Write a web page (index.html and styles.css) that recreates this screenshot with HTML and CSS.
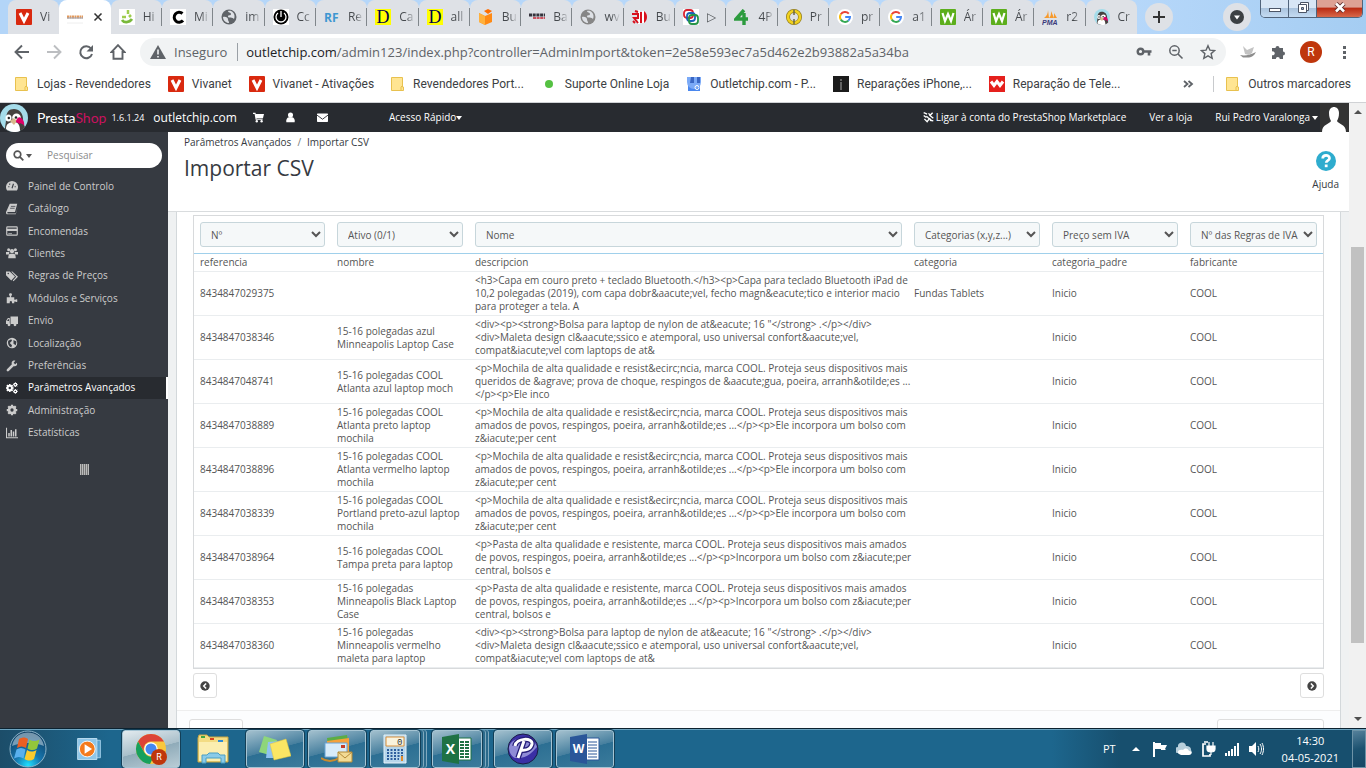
FILE: index.html
```html
<!DOCTYPE html>
<html lang="pt">
<head>
  <meta charset="UTF-8">
  <meta name="viewport" content="width=device-width, initial-scale=1.0">
  <title>Importar CSV - outletchip.com</title>
  <link rel="stylesheet" href="styles.css">
</head>
<body>
  <svg class="sprite" aria-hidden="true">
    <symbol id="v" viewBox="0 0 16 16"><rect width="16" height="16" rx="1" fill="#d9290f"/><path d="M4 4l4 8 4-8" fill="none" stroke="#fff" stroke-width="3"/></symbol>
    <symbol id="folder" viewBox="0 0 14 16"><path d="M.5 1.500h11v9.500h1v3.500H.5z" fill="#ffe592" stroke="#e8c14f"/><path d="M11.500 9.500l-1.500 1.500v3.500" fill="none" stroke="#e8c14f"/></symbol>
    <symbol id="globe" viewBox="0 0 16 16"><circle cx="8" cy="8" r="7.500" fill="currentColor"/><path d="M2 8c3-.5 5 .5 5 2.500 0 1.500 1 1.500 1 3.500-3 0-6-2.500-6-6zM7 2c0 2 3 1 3 3S7 5.500 7 7.500s5 .5 6 2.500c1-2 .6-5-1-6.500C11 2 9 1.500 7 2z" fill="#dee1e6"/></symbol>
    <symbol id="google" viewBox="0 0 16 16"><circle cx="8" cy="8" r="8" fill="#fff"/><g fill="none" stroke-width="2"><path d="M11.800 4.600A5 5 0 0 0 3.800 5.300" stroke="#ea4335"/><path d="M3.800 5.300a5 5 0 0 0 0 5.300" stroke="#fbbc05"/><path d="M3.800 10.600a5 5 0 0 0 7.500 1.100" stroke="#34a853"/><path d="M11.300 11.700A5 5 0 0 0 13 8H8.200" stroke="#4285f4"/></g></symbol>
    <symbol id="w" viewBox="0 0 16 16"><rect width="16" height="16" rx="1" fill="#5cae1c"/><path d="M2.500 4l2.500 8 3-7 3 7 2.500-8" fill="none" stroke="#fff" stroke-width="2.200"/></symbol>
    <symbol id="presta" viewBox="0 0 28 28"><circle cx="14" cy="14" r="14" fill="#a5dcea"/><path d="M5 25c0-4 1-6 1-9 0-8 3-11 8-11s9 4 9 10c0 4 1 6 2 8-5 6-14 6-20 2z" fill="#46413f"/><path d="M6 25c0-5 3-7 8-7 4 0 6 3 6 9-5 2-10 1-14-2z" fill="#fff"/><ellipse cx="8.500" cy="14" rx="3" ry="3.600" fill="#fff"/><ellipse cx="16.500" cy="13.500" rx="4.300" ry="4" fill="#fff"/><circle cx="8.800" cy="14" r="1.200" fill="#222"/><circle cx="16" cy="13.500" r="1.300" fill="#222"/><path d="M10 17l4-3 3 3-3 4z" fill="#d8b98c"/><path d="M16 18c0-3 3-6 5-4 2 1 4 5 3 8-2-2-5-2-8-4z" fill="#df0067"/><path d="M20 19l4 2-3 5z" fill="#46413f"/></symbol>
    <symbol id="cog" viewBox="0 0 16 16"><path d="M8 1v14M1 8h14M3 3l10 10M13 3L3 13" stroke="currentColor" stroke-width="3"/><circle cx="8" cy="8" r="3.900" fill="none" stroke="currentColor" stroke-width="3.400"/><circle cx="8" cy="8" r="2.200" fill="#363a41"/></symbol>
  </svg>

  <header class="browser">
    <div class="tabstrip">
      <div class="tabs">
        <a href="#" class="tab"><svg viewBox="0 0 16 16"><use href="#v"/></svg><span>Vi</span></a>
        <a href="#" class="tab active"><svg viewBox="0 0 16 16"><path d="M0 8h16" stroke="#e39a5c" stroke-width="3" stroke-dasharray="2 .5"/><path d="M0 9h16" stroke="#9aa5bb"/><path d="M0 14h16" stroke="#eee"/></svg><svg class="close" viewBox="0 0 16 16"><path d="M4 4l8 8M12 4l-8 8" stroke="#333" stroke-width="1.800"/></svg></a>
        <a href="#" class="tab"><svg viewBox="0 0 16 16"><rect width="16" height="16" fill="#fff"/><path d="M9 1v4M3 8h4M12 6l-2 2" stroke="#9fce4e" stroke-width="2.500"/><path d="M3 11c2 3 7 3 10-1" fill="none" stroke="#79b93b" stroke-width="2.800"/></svg><span>Hi</span></a>
        <a href="#" class="tab"><svg viewBox="0 0 16 16"><rect width="16" height="16" fill="#fff"/><path d="M12.500 4.500a5 5 0 1 0 .5 7" fill="none" stroke="#000" stroke-width="3"/></svg><span>Mi</span></a>
        <a href="#" class="tab"><svg class="gray" viewBox="0 0 16 16"><use href="#globe"/></svg><span>im</span></a>
        <a href="#" class="tab"><svg viewBox="0 0 16 16"><rect width="16" height="16" fill="#fff"/><circle cx="8" cy="8" r="7.500" fill="#000"/><path d="M5 4a5 5 0 1 0 6 0M8 2v6" fill="none" stroke="#fff" stroke-width="1.300"/></svg><span>Cc</span></a>
        <a href="#" class="tab"><svg viewBox="0 0 16 16"><text x="0" y="13" font-family="Open Sans, sans-serif" font-weight="700" font-size="12" fill="#3e97d1">RF</text></svg><span>Re</span></a>
        <a href="#" class="tab"><svg viewBox="0 0 16 16"><rect width="16" height="16" fill="#ff0"/><text x="8" y="14" text-anchor="middle" font-family="Liberation Serif, serif" font-size="18" fill="#00004a">D</text></svg><span>Ca</span></a>
        <a href="#" class="tab"><svg viewBox="0 0 16 16"><rect width="16" height="16" fill="#ff0"/><text x="8" y="14" text-anchor="middle" font-family="Liberation Serif, serif" font-size="18" fill="#00004a">D</text></svg><span>all</span></a>
        <a href="#" class="tab"><svg viewBox="0 0 16 16"><path d="M1 4l6 3 7-3v9l-7 3-6-3z" fill="#ff8a14"/><path d="M1 4l6 3v9l-6-3z" fill="#ffb13d"/><path d="M6 2l4-2 4 2-4 3z" fill="#ff6e00"/></svg><span>Bu</span></a>
        <a href="#" class="tab"><svg viewBox="0 0 16 16"><path d="M0 6h16" stroke="#35333c" stroke-width="3" stroke-dasharray="3 .7"/><path d="M4 9h12" stroke="#cb5360" stroke-width="2" stroke-dasharray="3 .6"/></svg><span>Ba</span></a>
        <a href="#" class="tab"><svg class="gray light" viewBox="0 0 16 16"><use href="#globe"/></svg><span>wv</span></a>
        <a href="#" class="tab"><svg viewBox="0 0 16 16"><path d="M7 1v14M11 2v12" stroke="#fff" stroke-width="2"/><path d="M12 2c4 3 4 9 0 12z" fill="#d8101c"/><path d="M0 5h6v4H2l4 5M9 3v11M3 2l3 1M1 12l2 2" fill="none" stroke="#d8101c" stroke-width="2"/></svg><span>Bu</span></a>
        <a href="#" class="tab"><svg viewBox="0 0 16 16"><rect width="16" height="16" fill="#fff"/><g fill="none" stroke-width="1.800"><rect x="1" y="1" width="9" height="8" rx="3" stroke="#d92231"/><rect x="4" y="4" width="8" height="8" rx="3" stroke="#1c63b7"/><rect x="6" y="6" width="9" height="9" rx="3" stroke="#269447"/></g></svg><span>▷</span></a>
        <a href="#" class="tab"><svg viewBox="0 0 16 16"><path d="M10 1L2 10h12M10 4v12" fill="none" stroke="#2c9b3e" stroke-width="3.400"/></svg><span>4P</span></a>
        <a href="#" class="tab"><svg viewBox="0 0 16 16"><circle cx="8" cy="8" r="6" fill="none" stroke="#8f7a19" stroke-width="4"/><circle cx="8" cy="8" r="6" fill="none" stroke="#f2d21f" stroke-width="2.600"/><path d="M8 1v5M8 10v5" stroke="#6b6748" stroke-width="1.500"/></svg><span>Pr</span></a>
        <a href="#" class="tab"><svg viewBox="0 0 16 16"><use href="#google"/></svg><span>pr</span></a>
        <a href="#" class="tab"><svg viewBox="0 0 16 16"><use href="#google"/></svg><span>a1</span></a>
        <a href="#" class="tab"><svg viewBox="0 0 16 16"><use href="#w"/></svg><span>Ár</span></a>
        <a href="#" class="tab"><svg viewBox="0 0 16 16"><use href="#w"/></svg><span>Ár</span></a>
        <a href="#" class="tab"><svg viewBox="0 0 16 16"><path d="M2 9c3-2 4-5 4-8l1 8zM7 9c2-2 2-4 2-7l3 7zM12 9V4l3 5z" fill="#f79a2c"/><text x="0" y="16" font-family="Liberation Sans, sans-serif" font-style="italic" font-weight="700" font-size="7" fill="#3a3a7c">PMA</text></svg><span>r2</span></a>
        <a href="#" class="tab"><svg viewBox="0 0 16 16"><use href="#presta"/></svg><span>Cr</span></a>
      </div>
      <div class="strip-right">
        <button class="round" aria-label="Novo separador"><svg viewBox="0 0 16 16"><path d="M8 2v12M2 8h12" stroke="#333" stroke-width="2"/></svg></button>
        <button class="round search-tabs" aria-label="Pesquisar separadores"><svg viewBox="0 0 16 16"><circle cx="8" cy="8" r="7" fill="#3c4043"/><path d="M5 6.500h6L8 10.500z" fill="#fff"/></svg></button>
        <div class="window-buttons">
          <button aria-label="Minimizar"><svg viewBox="0 0 16 16"><rect x="2.500" y="8.500" width="11" height="3" fill="#fff" stroke="#4c5566"/></svg></button>
          <button aria-label="Restaurar"><svg viewBox="0 0 16 16"><path d="M5.500 2.500h8v8h-8z" fill="#fff" stroke="#4c5566"/><path d="M3.500 4.500h8v8h-8z" fill="#fff" stroke="#4c5566"/><path d="M6.500 7.500h2v2h-2z" fill="#9bb0c8" stroke="#4c5566"/></svg></button>
          <button class="close-window" aria-label="Fechar"><svg viewBox="0 0 16 16"><path d="M4 3.500l8 8M12 3.500l-8 8" stroke="#5b2b2b" stroke-width="4.500"/><path d="M4 3.500l8 8M12 3.500l-8 8" stroke="#fff" stroke-width="2.600"/></svg></button>
        </div>
      </div>
    </div>

    <div class="toolbar">
      <div class="nav-buttons">
        <button aria-label="Recuar"><svg viewBox="0 0 16 16"><path d="M15 8H2M8 1.500L1.500 8 8 14.500" fill="none" stroke="#5f6368" stroke-width="1.900"/></svg></button>
        <button aria-label="Avançar"><svg viewBox="0 0 16 16"><path d="M1 8h13M8 1.500L14.500 8 8 14.500" fill="none" stroke="#bcbec1" stroke-width="1.900"/></svg></button>
        <button aria-label="Recarregar"><svg viewBox="0 0 16 16"><path d="M13 4.500A6 6 0 1 0 14 10" fill="none" stroke="#5f6368" stroke-width="2"/><path d="M15 1v6.500H8.500z" fill="#5f6368"/></svg></button>
        <button aria-label="Página inicial"><svg viewBox="0 0 16 16"><path d="M8 1.200L1.500 8h2v6.700h9V8h2z" fill="none" stroke="#5f6368" stroke-width="1.900"/></svg></button>
      </div>
      <div class="address">
        <svg class="warn" viewBox="0 0 16 16"><path d="M8 1l8 14H0z" fill="#5f6368"/><path d="M8 5.500v5M8 12v1.500" stroke="#f1f3f4" stroke-width="1.600"/></svg>
        <span class="insecure">Inseguro</span>
        <span class="url"><b>outletchip.com</b>/admin123/index.php?controller=AdminImport&amp;token=2e58e593ec7a5d462e2b93882a5a34ba</span>
        <svg viewBox="0 0 16 16"><circle cx="4.500" cy="7.500" r="2.800" fill="none" stroke="#5f6368" stroke-width="2.400"/><path d="M8 7.500h7.500M13 7.500v4" stroke="#5f6368" stroke-width="2.600"/></svg>
        <svg viewBox="0 0 16 16"><circle cx="6.500" cy="6.500" r="4.700" fill="none" stroke="#5f6368" stroke-width="1.500"/><path d="M10 10l4.500 4.500M4.300 6.500h4.400" stroke="#5f6368" stroke-width="1.600"/></svg>
        <svg viewBox="0 0 16 16"><path d="M8 1.700l1.900 4.400 4.800.4-3.600 3.100 1.100 4.700L8 11.800l-4.200 2.500 1.100-4.700-3.600-3.100 4.800-.4z" fill="none" stroke="#5f6368" stroke-width="1.400"/></svg>
      </div>
      <div class="extensions">
        <svg viewBox="0 0 16 16"><path d="M0 11c5 1 10 0 16-3-2 4-4 5-7 5.500H3z" fill="#8d8d8d"/><path d="M5 10L3 2l4 4 7-3-2 6-3 2z" fill="#c3c3c3"/></svg>
        <svg viewBox="0 0 16 16"><path d="M2 4h3.500a2 2 0 1 1 4 0H13v3.500a2 2 0 1 1 0 4V15H9.800a2 2 0 1 0-4 0H2v-3.800a2 2 0 1 0 0-3.700z" fill="#5f6368"/></svg>
        <button class="profile">R</button>
        <svg viewBox="0 0 16 16"><path d="M7 2h3v3H7zM7 7h3v3H7zM7 12h3v3H7z" fill="#5f6368"/></svg>
      </div>
    </div>

    <nav class="bookmarks">
      <a href="#"><svg class="fold" viewBox="0 0 14 16"><use href="#folder"/></svg>Lojas - Revendedores</a>
      <a href="#"><svg viewBox="0 0 16 16"><use href="#v"/></svg>Vivanet</a>
      <a href="#"><svg viewBox="0 0 16 16"><use href="#v"/></svg>Vivanet - Ativações</a>
      <a href="#"><svg class="fold" viewBox="0 0 14 16"><use href="#folder"/></svg>Revendedores Port...</a>
      <a href="#"><svg viewBox="0 0 16 16"><circle cx="8" cy="8" r="4" fill="#55c142"/></svg>Suporte Online Loja</a>
      <a href="#"><svg viewBox="0 0 16 16"><path d="M2 5h12v10H2z" fill="#4a87ee"/><path d="M1 1h14v5a2 2 0 0 1-14 0z" fill="#7baaf7"/><path d="M5 1h3v6H4zM11 1h3v6h-3z" fill="#3a67c4"/><circle cx="11" cy="11.500" r="2" fill="none" stroke="#fff"/></svg>Outletchip.com - P...</a>
      <a href="#"><svg viewBox="0 0 16 16"><rect width="16" height="16" fill="#1b1b1b"/><path d="M8 3v2M8 6v8" stroke="#aaa"/></svg>Reparações iPhone,...</a>
      <a href="#"><svg viewBox="0 0 16 16"><rect width="16" height="16" fill="#e5201d"/><path d="M2 5.500l3 4 3-4 3 4 3-4" fill="none" stroke="#fff" stroke-width="3"/></svg>Reparação de Tele...</a>
      <button class="more" aria-label="Mais marcadores"><svg viewBox="0 0 16 16"><path d="M4 5l3.500 3L4 11M8.500 5L12 8l-3.500 3" fill="none" stroke="#5f6368" stroke-width="1.800"/></svg></button>
      <a href="#" class="others"><svg class="fold" viewBox="0 0 14 16"><use href="#folder"/></svg>Outros marcadores</a>
    </nav>
  </header>

  <div class="page">
    <div class="site">
      <header class="topbar">
        <a href="#" class="logo"><svg viewBox="0 0 28 28"><use href="#presta"/></svg><span>Presta<em>Shop</em></span></a>
        <span class="version">1.6.1.24</span>
        <a href="#" class="shop-name">outletchip.com</a>
        <a href="#" class="notif" aria-label="Encomendas"><svg viewBox="0 0 16 16"><path d="M0 2h3l1.500 8.500H14" fill="none" stroke="currentColor" stroke-width="1.600"/><path d="M3.500 3H16l-1.500 6H4.500z" fill="currentColor"/><circle cx="5.500" cy="13.500" r="1.700" fill="currentColor"/><circle cx="12.500" cy="13.500" r="1.700" fill="currentColor"/></svg></a>
        <a href="#" class="notif" aria-label="Clientes"><svg viewBox="0 0 16 16"><circle cx="8" cy="4.500" r="3.700" fill="currentColor"/><path d="M2 15c-1-4 1-7 3.500-7.500h5C13 8 15 11 14 15z" fill="currentColor"/></svg></a>
        <a href="#" class="notif" aria-label="Mensagens"><svg viewBox="0 0 16 16"><rect y="2" width="16" height="12.500" rx="1" fill="currentColor"/><path d="M0 4.500l8 6 8-6" fill="none" stroke="#282b30" stroke-width="1.300"/></svg></a>
        <a href="#" class="quick">Acesso Rápido<i class="caret"></i></a>
        <a href="#" class="market"><svg viewBox="0 0 16 16"><path d="M1 1l5 2M1 5l4 3M8 2l3 3M14 1l-4 4 5 4M10 12l5 1M2 10l4 4 3-4-4-4M9 9l3 3" fill="none" stroke="currentColor" stroke-width="2"/></svg>Ligar à conta do PrestaShop Marketplace</a>
        <a href="#" class="view">Ver a loja</a>
        <a href="#" class="user">Rui Pedro Varalonga<i class="caret"></i></a>
        <svg class="avatar" viewBox="0 0 29 29"><rect width="29" height="29" fill="#333"/><path d="M9 10c0-8 10-8 10 0 0 4-1 6-2 8 1 3 9 3 9 11H2c0-8 8-8 9-11-1-2-2-4-2-8z" fill="#fff"/></svg>
      </header>

      <div class="columns">
        <aside class="sidebar">
          <form class="search">
            <svg viewBox="0 0 16 16"><circle cx="6.500" cy="6.500" r="4.800" fill="none" stroke="#555" stroke-width="2.400"/><path d="M10 10l5 5" stroke="#555" stroke-width="2.600"/></svg>
            <i class="caret"></i>
            <input type="text" aria-label="Pesquisar" placeholder="Pesquisar">
          </form>
          <nav class="menu">
            <a href="#"><svg viewBox="0 0 16 16"><path d="M1.500 14a8 8 0 1 1 13 0z" fill="currentColor"/><path d="M8 11l2-6M3 9h1.500M4.500 5l1 1M11.500 9H13" stroke="#363a41" stroke-width="1.500"/></svg>Painel de Controlo</a>
            <a href="#"><svg viewBox="0 0 16 16"><path d="M5 1h10l-3 11H3c-2 0-2 2 0 2h10l3-10-3 11H2c-3 0-2-4-1-5z" fill="currentColor"/><path d="M6.500 4.500h6M5.500 7h6" stroke="#363a41"/></svg>Catálogo</a>
            <a href="#"><svg viewBox="0 0 16 16"><rect x="1" y="2.500" width="14" height="11" rx="1" fill="none" stroke="currentColor" stroke-width="1.500"/><path d="M1 6.500h14" stroke="currentColor" stroke-width="3"/><path d="M3 11.500h5" stroke="currentColor"/></svg>Encomendas</a>
            <a href="#"><svg viewBox="0 0 16 16"><circle cx="3.500" cy="3.500" r="2" fill="currentColor"/><circle cx="12.500" cy="3.500" r="2" fill="currentColor"/><circle cx="8" cy="5.500" r="2.800" fill="currentColor"/><path d="M0 10V6.500h4.500L4 10zM16 10V6.500h-4.500L12 10zM3 15c0-4 1-6 3-6h4c2 0 3 2 3 6z" fill="currentColor"/></svg>Clientes</a>
            <a href="#"><svg viewBox="0 0 16 16"><path d="M0 2h5l7 6.500-5 5.500L0 7zM7 2h1.500L16 9l-6 6-1-1 4.500-5z" fill="currentColor"/><circle cx="3" cy="4.500" r="1" fill="#363a41"/></svg>Regras de Preços</a>
            <a href="#"><svg viewBox="0 0 16 16"><path d="M1 7h4c1-1-1-2-1-4s4-2 4 0-2 3-1 4h4v3c2 1 2-1 4 0v3c-2 1-2-1-4 0v2H8c0-2 0-3-1.500-3S5 13 5 15H1z" fill="currentColor"/></svg>Módulos e Serviços</a>
            <a href="#"><svg viewBox="0 0 16 16"><path d="M6 2h10v10H6zM5 4H2.500L0 8v4h5z" fill="currentColor"/><path d="M4 5.500H2.800L1.500 8H4z" fill="#363a41"/><circle cx="4" cy="13" r="1.900" fill="currentColor"/><circle cx="12" cy="13" r="1.900" fill="currentColor"/></svg>Envio</a>
            <a href="#"><svg viewBox="0 0 16 16"><circle cx="8" cy="8" r="7" fill="currentColor"/><path d="M3 5l4-2 1 2-3 3 3 3-1 3c-3-1-5-5-4-9zM10 4l4 2-1 5-3-2z" fill="#363a41"/></svg>Localização</a>
            <a href="#"><svg viewBox="0 0 16 16"><path d="M2.500 13.500L10 6" stroke="currentColor" stroke-width="3.400" stroke-linecap="round"/><path d="M14.500 3.500L12 6l-2-2 2.500-3C9 0 6.500 3 8 6l2 2c3 1 6-1 4.500-4.500z" fill="currentColor"/></svg>Preferências</a>
            <a href="#" class="current"><svg viewBox="0 0 16 16"><use href="#cog" x="-1" y="2" width="12" height="12"/><use href="#cog" x="9" y="0" width="7" height="7"/><use href="#cog" x="9" y="9" width="7" height="7"/></svg>Parâmetros Avançados</a>
            <a href="#"><svg viewBox="0 0 16 16"><use href="#cog"/></svg>Administração</a>
            <a href="#"><svg viewBox="0 0 16 16"><path d="M.7 1v13.300H16" fill="none" stroke="currentColor" stroke-width="1.400"/><path d="M4 12.500V8M7 12.500V4M10 12.500V6M13 12.500V3" stroke="currentColor" stroke-width="2"/></svg>Estatísticas</a>
          </nav>
          <button class="collapse" aria-label="Recolher menu"></button>
        </aside>

        <main>
          <div class="page-head">
            <div>
              <p class="breadcrumb"><a href="#">Parâmetros Avançados</a><span>/</span><a href="#">Importar CSV</a></p>
              <h1>Importar CSV</h1>
            </div>
            <a href="#" class="help"><svg viewBox="0 0 20 20"><circle cx="10" cy="10" r="10" fill="#2eacce"/><path d="M6.700 7.500c0-4 6.800-4 6.800-.3 0 2.300-3.300 2-3.300 4.600" fill="none" stroke="#fff" stroke-width="2.700"/><path d="M8.800 13.500h2.800v2.700H8.800z" fill="#fff"/></svg>Ajuda</a>
          </div>

          <div class="content">
            <section class="panel">
              <div class="panel-body">
                <table>
                  <thead>
                    <tr>
                      <th><select aria-label="Coluna 1"><option>Nº</option></select></th>
                      <th><select aria-label="Coluna 2"><option>Ativo (0/1)</option></select></th>
                      <th class="wide"><select aria-label="Coluna 3"><option>Nome</option></select></th>
                      <th><select aria-label="Coluna 4"><option>Categorias (x,y,z...)</option></select></th>
                      <th><select aria-label="Coluna 5"><option>Preço sem IVA</option></select></th>
                      <th><select aria-label="Coluna 6"><option>Nº das Regras de IVA</option></select></th>
                    </tr>
                  </thead>
                  <tbody>
                    <tr><td>referencia</td><td>nombre</td><td class="desc">descripcion</td><td>categoria</td><td>categoria_padre</td><td>fabricante</td></tr>
                    <tr><td>8434847029375</td><td></td><td class="desc">&lt;h3&gt;Capa em couro preto + teclado Bluetooth.&lt;/h3&gt;&lt;p&gt;Capa para teclado Bluetooth iPad de<br>10,2 polegadas (2019), com capa dobr&amp;aacute;vel, fecho magn&amp;eacute;tico e interior macio<br>para proteger a tela. A</td><td>Fundas Tablets</td><td>Inicio</td><td>COOL</td></tr>
                    <tr><td>8434847038346</td><td>15-16 polegadas azul Minneapolis Laptop Case</td><td class="desc">&lt;div&gt;&lt;p&gt;&lt;strong&gt;Bolsa para laptop de nylon de at&amp;eacute; 16 "&lt;/strong&gt; .&lt;/p&gt;&lt;/div&gt;<br>&lt;div&gt;Maleta design cl&amp;aacute;ssico e atemporal, uso universal confort&amp;aacute;vel,<br>compat&amp;iacute;vel com laptops de at&amp;</td><td></td><td>Inicio</td><td>COOL</td></tr>
                    <tr><td>8434847048741</td><td>15-16 polegadas COOL Atlanta azul laptop moch</td><td class="desc">&lt;p&gt;Mochila de alta qualidade e resist&amp;ecirc;ncia, marca COOL. Proteja seus dispositivos mais<br>queridos de &amp;agrave; prova de choque, respingos de &amp;aacute;gua, poeira, arranh&amp;otilde;es ...<br>&lt;/p&gt;&lt;p&gt;Ele inco</td><td></td><td>Inicio</td><td>COOL</td></tr>
                    <tr><td>8434847038889</td><td>15-16 polegadas COOL Atlanta preto laptop mochila</td><td class="desc">&lt;p&gt;Mochila de alta qualidade e resist&amp;ecirc;ncia, marca COOL. Proteja seus dispositivos mais<br>amados de povos, respingos, poeira, arranh&amp;otilde;es ...&lt;/p&gt;&lt;p&gt;Ele incorpora um bolso com<br>z&amp;iacute;per cent</td><td></td><td>Inicio</td><td>COOL</td></tr>
                    <tr><td>8434847038896</td><td>15-16 polegadas COOL Atlanta vermelho laptop mochila</td><td class="desc">&lt;p&gt;Mochila de alta qualidade e resist&amp;ecirc;ncia, marca COOL. Proteja seus dispositivos mais<br>amados de povos, respingos, poeira, arranh&amp;otilde;es ...&lt;/p&gt;&lt;p&gt;Ele incorpora um bolso com<br>z&amp;iacute;per cent</td><td></td><td>Inicio</td><td>COOL</td></tr>
                    <tr><td>8434847038339</td><td>15-16 polegadas COOL Portland preto-azul laptop mochila</td><td class="desc">&lt;p&gt;Mochila de alta qualidade e resist&amp;ecirc;ncia, marca COOL. Proteja seus dispositivos mais<br>amados de povos, respingos, poeira, arranh&amp;otilde;es ...&lt;/p&gt;&lt;p&gt;Ele incorpora um bolso com<br>z&amp;iacute;per cent</td><td></td><td>Inicio</td><td>COOL</td></tr>
                    <tr><td>8434847038964</td><td>15-16 polegadas COOL Tampa preta para laptop</td><td class="desc">&lt;p&gt;Pasta de alta qualidade e resistente, marca COOL. Proteja seus dispositivos mais amados<br>de povos, respingos, poeira, arranh&amp;otilde;es ...&lt;/p&gt;&lt;p&gt;Incorpora um bolso com z&amp;iacute;per<br>central, bolsos e</td><td></td><td>Inicio</td><td>COOL</td></tr>
                    <tr><td>8434847038353</td><td>15-16 polegadas Minneapolis Black Laptop Case</td><td class="desc">&lt;p&gt;Pasta de alta qualidade e resistente, marca COOL. Proteja seus dispositivos mais amados<br>de povos, respingos, poeira, arranh&amp;otilde;es ...&lt;/p&gt;&lt;p&gt;Incorpora um bolso com z&amp;iacute;per<br>central, bolsos e</td><td></td><td>Inicio</td><td>COOL</td></tr>
                    <tr><td>8434847038360</td><td>15-16 polegadas Minneapolis vermelho maleta para laptop</td><td class="desc">&lt;div&gt;&lt;p&gt;&lt;strong&gt;Bolsa para laptop de nylon de at&amp;eacute; 16 "&lt;/strong&gt; .&lt;/p&gt;&lt;/div&gt;<br>&lt;div&gt;Maleta design cl&amp;aacute;ssico e atemporal, uso universal confort&amp;aacute;vel,<br>compat&amp;iacute;vel com laptops de at&amp;</td><td></td><td>Inicio</td><td>COOL</td></tr>
                  </tbody>
                </table>
                <div class="pager">
                  <button aria-label="Anterior"><svg viewBox="0 0 16 16"><circle cx="8" cy="8" r="7.500" fill="#444"/><path d="M9.800 4L6 8l3.800 4" fill="none" stroke="#fff" stroke-width="2.400"/></svg></button>
                  <button aria-label="Seguinte"><svg viewBox="0 0 16 16"><circle cx="8" cy="8" r="7.500" fill="#444"/><path d="M6.200 4L10 8l-3.800 4" fill="none" stroke="#fff" stroke-width="2.400"/></svg></button>
                </div>
              </div>
              <div class="panel-footer">
                <button class="cancel" aria-label="Cancelar"></button>
                <button class="import" aria-label="Importar"></button>
              </div>
            </section>
          </div>
        </main>
      </div>
    </div>
    <div class="scrollbar" aria-hidden="true">
      <i class="arrow up"></i>
      <div class="track"><div class="thumb"></div></div>
      <i class="arrow down"></i>
    </div>
  </div>

  <footer class="taskbar">
    <button class="start" aria-label="Iniciar"><svg viewBox="0 0 38 38"><defs><radialGradient id="orb" cx=".5" cy=".95" r=".9"><stop offset="0" stop-color="#1fe0ff"/><stop offset=".4" stop-color="#1676ae"/><stop offset="1" stop-color="#0f3f63"/></radialGradient></defs><circle cx="19" cy="19" r="18" fill="url(#orb)" stroke="#8db4c9"/><path d="M3 16C5 6 12 2.500 19 2.500S33 6 35 16c-9-4-23-4-32 0z" fill="#c8dbe6" opacity=".55"/><path d="M10 9c4-2 6-2 9 0l-2 9c-3-2-6-2-9 0z" fill="#ea5f23"/><path d="M20.500 9.500c3 2 6 2 10 0l-2.500 9c-3 2-6 2-9.500 0z" fill="#93c63a"/><path d="M7.500 19.500c3-2 6-2 9 0l-2 9c-3-2-6-2-9.500 0z" fill="#59b0ee"/><path d="M18 20c3 2 6 2 9.500 0l-2.500 9c-3 2-6 2-9.500 0z" fill="#fccb2d"/></svg></button>
    <button class="app plain media" aria-label="Windows Media Player"><svg viewBox="0 0 32 32"><path d="M7 6h22v20H7z" fill="#5aa0cc" stroke="#a8d4ee"/><path d="M3 4h22v24H3z" fill="#8fc6e8" stroke="#c5e4f5"/><circle cx="14" cy="16" r="9" fill="#f47a1c" stroke="#fff"/><path d="M11 10.500v11l8.500-5.500z" fill="#fff"/></svg></button>
    <button class="app on" aria-label="Google Chrome"><svg viewBox="0 0 32 32"><circle cx="16" cy="16" r="15" fill="#f9c73d"/><path d="M3 8.500A15 15 0 0 1 29 8.500H16a7.500 7.500 0 0 0-6.500 11z" fill="#dc4437"/><path d="M3 8.500l6.500 11.300A7.500 7.500 0 0 0 19 23l-4 8A15 15 0 0 1 3 8.500z" fill="#17a05e"/><circle cx="16" cy="16" r="6.800" fill="#fff"/><circle cx="16" cy="16" r="5.500" fill="#4688f1"/><circle cx="24" cy="24" r="8" fill="#bf360c"/><text x="24" y="27" text-anchor="middle" font-family="Roboto, sans-serif" font-size="9" fill="#fff">R</text></svg></button>
    <button class="app plain" aria-label="Explorador"><svg viewBox="0 0 32 32"><path d="M1 5l1-3h8l2 2h19v25H1z" fill="#f3dc83" stroke="#c6a442"/><path d="M4 3h4v2H4z" fill="#3da544"/><path d="M13 5h4v2h-4z" fill="#d9441c"/><path d="M21 7h5v2h-5z" fill="#2c8bd6"/><path d="M2 9h28v19H2z" fill="#fbeeb0"/><path d="M5 30V22h5l2-2h9l2 2h5v8h-4v-5H9v5z" fill="#8acbe8" stroke="#4b9fc4"/></svg></button>
    <button class="app" aria-label="Notas autocolantes"><svg viewBox="0 0 32 32"><path d="M5 3l13 4-4 16L0 19z" fill="#8ed67b"/><path d="M9 9l14-1 1 17H7z" fill="#8fc3f2"/><path d="M11 11l16-5 5 17-17 4z" fill="#fbe664" stroke="#e1c63c" stroke-width=".5"/></svg></button>
    <button class="app" aria-label="Correio"><svg viewBox="0 0 32 32"><path d="M6 5l20-3 2 14-20 2z" fill="#5bad45"/><path d="M6 8l22-3v14H6z" fill="#f6a03a"/><path d="M4 10h22v14H4z" fill="#d8ebf9" stroke="#69a4d6"/><path d="M20 12h4v3h-4z" fill="#c43d28"/><path d="M0 25c6 4 12 4 18 0" fill="none" stroke="#c98b2e" stroke-width="2"/><path d="M17 19h14v10H17z" fill="#f3db94" stroke="#b38a37"/><path d="M17 19l7 6 7-6" fill="none" stroke="#b38a37"/></svg></button>
    <button class="app stack" aria-label="Calculadora"><svg viewBox="0 0 32 32"><path d="M5 2h22v28H5z" fill="#b7d6ea" stroke="#e6f3fa"/><path d="M7 4h18v9H7z" fill="#faf3dd" stroke="#d9903c"/><text x="18" y="12" font-family="Liberation Mono, monospace" font-size="9" fill="#333">0</text><path d="M8 17h16M8 20h16M8 23h16M8 26h12" stroke="#2d5e9c" stroke-width="2" stroke-dasharray="2 1.500"/><path d="M23 23v5" stroke="#e08a2b" stroke-width="2"/></svg></button>
    <button class="app stack" aria-label="Excel"><svg viewBox="0 0 32 32"><path d="M16 5h14v22H16z" fill="#fff" stroke="#1f7244"/><path d="M19 9h9M19 12h9M19 15h9M19 18h9M19 21h9M19 24h9" stroke="#1f7244" stroke-width="2" stroke-dasharray="4 1"/><path d="M1 4l17-3v30L1 28z" fill="#1f7244"/><text x="9.500" y="21" text-anchor="middle" font-family="Open Sans, sans-serif" font-weight="700" font-size="14" fill="#fff">X</text></svg></button>
    <button class="app" aria-label="PSPad"><svg viewBox="0 0 32 32"><circle cx="16" cy="16" r="15" fill="#3a2fa5" stroke="#1b1d45"/><path d="M2 14C5 2 27 2 30 14c-5 5-9 12-22 11-4-2-6-6-6-11z" fill="#8f8cd6"/><path d="M11 25l6-17M8 13c1-8 18-9 17-2-1 5-6 7-12 6" fill="none" stroke="#241d77" stroke-width="5.500"/><path d="M11 25l6-17M8 13c1-8 18-9 17-2-1 5-6 7-12 6" fill="none" stroke="#fff" stroke-width="3"/></svg></button>
    <button class="app" aria-label="Word"><svg viewBox="0 0 32 32"><path d="M16 5h14v22H16z" fill="#fff" stroke="#2a5699"/><path d="M19 9h9M19 12h9M19 15h9M19 18h9M19 21h9M19 24h9" stroke="#2a5699"/><path d="M1 4l17-3v30L1 28z" fill="#2a5699"/><text x="9.500" y="20" text-anchor="middle" font-family="Open Sans, sans-serif" font-weight="700" font-size="12" fill="#fff">W</text></svg></button>
    <div class="tray">
      <span class="lang">PT</span>
      <svg viewBox="0 0 16 16"><path d="M4 10h8L8 6z" fill="#fff"/></svg>
      <svg viewBox="0 0 16 16"><path d="M2 1v15" stroke="#fff" stroke-width="2"/><path d="M3 2h6v2h6l-2 4 1 1H9V8H3z" fill="#fff"/></svg>
      <svg viewBox="0 0 16 16"><path d="M2 12a3 3 0 0 1 0-6 4 4 0 0 1 8-1c3 0 5 1 5 4 2 4-1 4-3 4H3z" fill="#b8cfdb"/><path d="M3 13c-3-3 1-5 4-4 3-3 5-1 6 1 4 0 3 4 0 4H5z" fill="#fff"/></svg>
      <svg viewBox="0 0 16 16"><path d="M6 3H3v12h7v-2M4 1h4" fill="none" stroke="#fff" stroke-width="1.700"/><path d="M7 5h8v3c0 2-2 3-4 3S7 10 7 8zM9 1v4M13 1v4M11 10v4" fill="#fff" stroke="#fff" stroke-width="1.200"/></svg>
      <svg viewBox="0 0 16 16"><path d="M2 15v-3M5 15v-5M8 15V8M11 15V5M14 15V2" stroke="#fff" stroke-width="2"/></svg>
      <svg viewBox="0 0 16 16"><path d="M1 5h3l4-4v14l-4-4H1z" fill="#fff"/><path d="M10 5c1 2 1 4 0 6M12 3c2 3 2 7 0 10M14 2c2 4 2 8 0 12" fill="none" stroke="#fff"/></svg>
      <div class="clock"><span>14:30</span><span>04-05-2021</span></div>
    </div>
    <button class="show-desktop" aria-label="Mostrar ambiente de trabalho"></button>
  </footer>
</body>
</html>
```
FILE: styles.css
```css
* {
  box-sizing: border-box;
  margin: 0;
  padding: 0;
}
body {
  height: 100vh;
  display: flex;
  flex-direction: column;
  overflow: hidden;
  font-family: "Open Sans", "Noto Sans", sans-serif;
  font-size: 10px;
  line-height: 13px;
  color: #555;
}
a {
  color: inherit;
  text-decoration: none;
}
button {
  border: none;
  background: none;
  font-family: inherit;
}
svg {
  flex: none;
  width: 16px;
  height: 16px;
}
.sprite {
  position: absolute;
  width: 0;
  height: 0;
}
.caret {
  display: inline-block;
  vertical-align: middle;
  border: 3px solid transparent;
  border-top: 4px solid currentColor;
  border-bottom: none;
}

/* Browser window */
.browser {
  flex: none;
  background: #fff;
  border-bottom: 1px solid #d0d2d5;
  font-size: 12px;
  color: #3c4043;
}
.tabstrip {
  display: flex;
  height: 34px;
  background: linear-gradient(90deg, #b3d5f8, #b9d9fb 80%, #a5cdf2);
}
.tabs {
  flex: 1;
  display: flex;
  min-width: 0;
  padding-left: 8px;
}
.tab {
  flex: 1;
  min-width: 0;
  display: flex;
  align-items: center;
  gap: 8px;
  padding: 0 0 0 8px;
  background: #dee1e6;
  border-radius: 8px 8px 0 0;
}
.tab span {
  flex: 1;
  overflow: hidden;
  white-space: nowrap;
  margin: 8px 0;
  line-height: 18px;
  border-right: 1px solid #80868b;
  background: linear-gradient(90deg, #45494d 40%, #dee1e6 85%);
  background-clip: text;
  color: transparent;
}
.tab:first-child span,
.tab:last-child span {
  border-right: none;
}
.tab.active {
  background: #fff;
}
.tab .close {
  width: 14px;
  height: 14px;
}
.gray {
  color: #5f6368;
}
.gray.light {
  color: #868686;
}
.strip-right {
  width: 229px;
  display: flex;
  align-items: center;
  padding: 0 3px 0 8px;
}
.round {
  width: 28px;
  height: 28px;
  display: flex;
  align-items: center;
  justify-content: center;
  border-radius: 50%;
  background: #dee1e6;
}
.search-tabs {
  margin-left: auto;
}
.window-buttons {
  align-self: flex-start;
  display: flex;
  height: 18px;
  margin-left: 9px;
  border: 1px solid #51647b;
  border-top: none;
  border-radius: 0 0 5px 5px;
  overflow: hidden;
}
.window-buttons button {
  width: 28px;
  display: flex;
  justify-content: center;
  border-right: 1px solid #51647b;
  background: linear-gradient(#d8e6f5 45%, #abc4de 50%, #c4dbf2);
}
.window-buttons .close-window {
  width: 45px;
  border: none;
  background: linear-gradient(#dda194 40%, #bb2d15 50%, #d8684a);
}
.toolbar {
  display: flex;
  align-items: center;
  height: 36px;
}
.nav-buttons {
  display: flex;
  gap: 16px;
  padding: 0 14px;
}
.nav-buttons button {
  width: 16px;
  height: 16px;
}
.address {
  flex: 1;
  min-width: 0;
  display: flex;
  align-items: center;
  gap: 16px;
  height: 28px;
  padding: 0 10px;
  border-radius: 14px;
  background: #f1f3f4;
  font-size: 13px;
  line-height: 18px;
  color: #5f6368;
}
.address .warn {
  margin-right: -8px;
}
.insecure {
  padding-right: 10px;
  margin-right: -8px;
  border-right: 1px solid #9aa0a6;
}
.url {
  flex: 1;
  overflow: hidden;
  white-space: nowrap;
}
.url b {
  font-weight: 400;
  color: #202124;
}
.extensions {
  display: flex;
  align-items: center;
  gap: 14px;
  padding: 0 14px;
}
.profile {
  width: 22px;
  height: 22px;
  border-radius: 50%;
  background: #bf360c;
  color: #fff;
  font-family: Roboto, sans-serif;
  font-size: 12px;
}
.bookmarks {
  display: flex;
  align-items: center;
  gap: 17px;
  height: 32px;
  padding: 0 15px 4px;
  white-space: nowrap;
  font-family: Roboto, "Open Sans", sans-serif;
  font-size: 12px;
}
.bookmarks a {
  display: flex;
  align-items: center;
  gap: 8px;
}
.bookmarks .fold {
  width: 14px;
}
.more {
  width: 16px;
  height: 16px;
  margin-left: auto;
}
.bookmarks .others {
  padding-left: 12px;
  border-left: 1px solid #c8cacd;
}

/* Back office */
.page {
  flex: 1;
  min-height: 0;
  display: flex;
}
.site {
  flex: 1;
  min-width: 0;
  display: flex;
  flex-direction: column;
}
.topbar {
  display: flex;
  align-items: center;
  height: 29px;
  background: #282b30;
  color: #fff;
}
.logo {
  display: flex;
  align-items: center;
  gap: 9px;
  font-family: Lato, sans-serif;
  font-size: 14px;
}
.logo svg {
  width: 28px;
  height: 28px;
}
.logo em {
  font-style: normal;
  color: #c9125f;
}
.version {
  margin: 0 9px 0 5px;
  font-size: 9px;
}
.shop-name {
  margin-right: 16px;
  font-size: 12px;
}
.notif {
  margin-right: 21px;
}
.notif svg {
  display: block;
  width: 11px;
  height: 11px;
}
.quick {
  margin-left: 40px;
}
.market {
  display: flex;
  align-items: center;
  gap: 2px;
  margin-left: auto;
}
.market svg {
  width: 11px;
  height: 11px;
}
.view {
  margin: 0 23px;
}
.user .caret {
  margin: 0 2px;
}
.avatar {
  width: 29px;
  height: 29px;
}
.columns {
  flex: 1;
  min-height: 0;
  display: flex;
}
.sidebar {
  flex: none;
  width: 168px;
  background: #363a41;
  color: #ccc;
}
.search {
  display: flex;
  align-items: center;
  height: 25px;
  margin: 11px 6px 7px;
  padding: 0 7px;
  border-radius: 13px;
  background: #fff;
  color: #555;
}
.search svg {
  width: 11px;
  height: 11px;
  margin-right: 2px;
}
.search input {
  flex: 1;
  min-width: 0;
  margin-left: 15px;
  border: none;
  outline: none;
  background: none;
  font: inherit;
}
.search input::placeholder {
  color: #8c8c8c;
}
.menu {
  display: grid;
  grid-auto-rows: 1fr;
  height: 269px;
}
.menu a {
  display: flex;
  align-items: center;
  gap: 10px;
  padding-left: 6px;
}
.menu svg {
  width: 12px;
  height: 12px;
}
.menu .current {
  border-right: 2px solid #fff;
  background: #282b30;
  color: #fff;
}
.collapse {
  display: block;
  width: 9px;
  height: 11px;
  margin: 20px auto;
  background: repeating-linear-gradient(90deg, #bbb 0 1px, #777 1px 2px);
}
main {
  flex: 1;
  min-width: 0;
  display: flex;
  flex-direction: column;
}
.page-head {
  display: flex;
  justify-content: space-between;
  height: 80px;
  padding: 4px 10px 0 16px;
  background: #fff;
  border-bottom: 1px solid #d9dcde;
  color: #363a41;
}
.breadcrumb span {
  margin: 0 6px;
  color: #777;
}
h1 {
  margin-top: 4px;
  font-size: 21px;
  font-weight: 400;
  line-height: 30px;
}
.help {
  display: flex;
  flex-direction: column;
  align-items: center;
  gap: 7px;
  padding-top: 15px;
}
.help svg {
  width: 20px;
  height: 20px;
}
.content {
  flex: 1;
  min-height: 0;
  overflow: hidden;
  padding: 0 8px;
  background: #eff1f2;
}
.panel {
  border: 1px solid #d3d8db;
  border-top: none;
  background: #fff;
}
.panel-body {
  padding: 3px 16px 12px;
}
table {
  width: 100%;
  table-layout: fixed;
  border-collapse: separate;
  border-spacing: 0;
  border: 1px solid #d8dadc;
}
th {
  width: 138px;
  padding: 6px;
  border-bottom: 1px solid #a0d0eb;
  line-height: 0;
}
th:first-child {
  width: 137px;
}
th:last-child {
  width: 139px;
}
th.wide {
  width: auto;
}
select {
  width: 100%;
  height: 25px;
  padding: 0 0 0 6px;
  border: 1px solid #c7d6db;
  border-radius: 3px;
  background-color: #f5f8f9;
  color: #555;
  font-family: inherit;
  font-size: 10px;
}
td {
  height: 18px;
  padding: 2px 0 2px 6px;
  border-bottom: 1px solid #eaedef;
  vertical-align: middle;
}
td.desc {
  white-space: nowrap;
}
tbody tr + tr td {
  height: 44px;
}
.pager {
  display: flex;
  justify-content: space-between;
  margin-top: 4px;
}
.pager button {
  display: flex;
  align-items: center;
  justify-content: center;
  width: 24px;
  height: 25px;
  border: 1px solid #dedede;
  border-radius: 3px;
  background: #fff;
}
.pager svg {
  width: 10px;
  height: 10px;
}
.panel-footer {
  display: flex;
  justify-content: space-between;
  padding: 8px 16px 8px 12px;
  border-top: 1px solid #eee;
  background: #fcfdfe;
}
.panel-footer button {
  height: 50px;
  border: 1px solid #dedede;
  border-radius: 3px;
  background: #fff;
}
.panel-footer .cancel {
  width: 54px;
}
.panel-footer .import {
  width: 107px;
}
.scrollbar {
  flex: none;
  display: flex;
  flex-direction: column;
  align-items: center;
  width: 17px;
  padding: 7px 2px;
  background: #f1f1f1;
}
.arrow {
  border: 4px solid transparent;
}
.arrow.up {
  border-top: none;
  border-bottom-color: #505050;
}
.arrow.down {
  border-bottom: none;
  border-top-color: #505050;
}
.track {
  flex: 1;
  align-self: stretch;
  display: grid;
  grid-template-rows: 133fr 396fr 74fr;
}
.thumb {
  grid-row: 2;
  background: #c1c1c1;
}

/* Desktop taskbar */
.taskbar {
  flex: none;
  display: flex;
  align-items: center;
  gap: 4px;
  height: 40px;
  border-top: 1px solid #0c2230;
  box-shadow: inset 0 1px #6ba3bf;
  background: linear-gradient(90deg, #1c4d69, #1d668d 8%, #1d668d 77%, #174f6e 82%);
  color: #fff;
}
.start {
  width: 56px;
  height: 38px;
}
.start svg {
  width: 38px;
  height: 38px;
}
.app {
  display: flex;
  align-items: center;
  justify-content: center;
  width: 58px;
  height: 38px;
  border: 1px solid #a5c4d3;
  border-radius: 3px;
  outline: 1px solid #133f57;
  background: linear-gradient(165deg, #a3c0ce, #467f9e 50%, #2c6f93 51%, #3b7b9b);
}
.app svg {
  width: 32px;
  height: 32px;
}
.app.plain {
  border-color: transparent;
  outline: none;
  background: none;
}
.app.media svg {
  width: 28px;
  height: 28px;
}
.app.on {
  background: linear-gradient(165deg, #e3ebef, #a9bfca 50%, #8fabb9 51%, #b9ccd5);
}
.app.stack {
  width: 50px;
  margin-right: 8px;
  box-shadow: 3px 0 #2b6a8b, 4px 0 #7fa9be, 6px 0 #2b6a8b, 7px 0 #7fa9be;
}
.tray {
  display: flex;
  align-items: center;
  gap: 8px;
  margin-left: auto;
}
.lang {
  margin-right: 4px;
  font-size: 11px;
}
.clock {
  display: flex;
  flex-direction: column;
  align-items: center;
  margin: 0 9px 0 10px;
  font-size: 11px;
  line-height: 17px;
}
.show-desktop {
  width: 14px;
  height: 38px;
  border: 1px solid #6d93a7;
  background: linear-gradient(165deg, #55809a, #1c5270 50%, #154765);
}
```
